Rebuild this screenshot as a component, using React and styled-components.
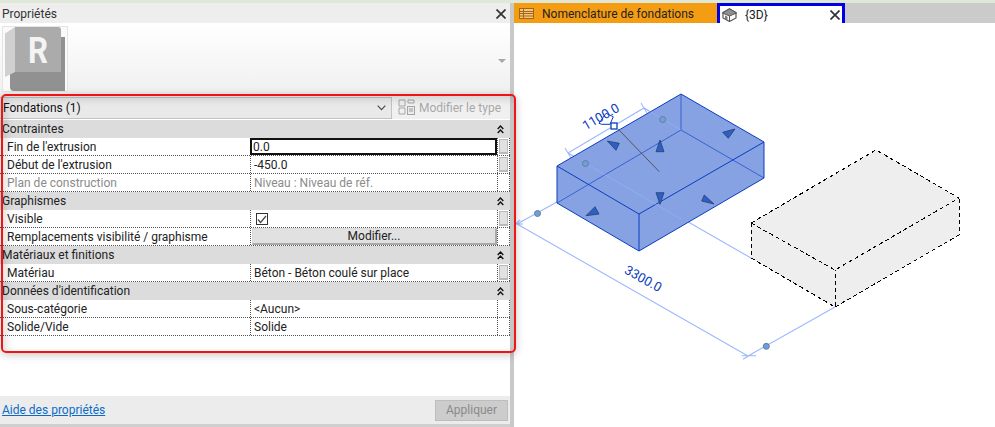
import React from 'react';
import styled, { createGlobalStyle } from 'styled-components';

const GlobalStyle = createGlobalStyle`
  html, body {
    margin: 0;
    padding: 0;
    background: #fff;
  }
  body {
    font-family: Roboto, "Noto Sans", "Liberation Sans", sans-serif;
    font-size: 12px;
    color: #111;
  }
`;

const Window = styled.div`
  position: relative;
  width: 995px;
  height: 427px;
  overflow: hidden;
  display: flex;
  flex-direction: column;
  background: #fff;
`;

const TopStrip = styled.div`
  height: 3px;
  flex: none;
  background: #dfe8d6;
`;

const Main = styled.div`
  flex: 1;
  display: flex;
  min-height: 0;
`;

const Panel = styled.div`
  width: 510px;
  flex: none;
  display: flex;
  flex-direction: column;
  background: #fff;
`;

const Divider = styled.div`
  width: 4px;
  flex: none;
  background: #c9c9c9;
`;

const TitleBar = styled.div`
  height: 20px;
  flex: none;
  box-sizing: border-box;
  display: flex;
  align-items: center;
  justify-content: space-between;
  padding: 2px 4px 0 2px;
  background: #eeeeee;
  color: #333;
`;

const CloseIcon = ({ size = 10, color = '#333' }) => (
  <svg width={size} height={size} viewBox="0 0 10 10">
    <path d="M0.5 0.5 L9.5 9.5 M9.5 0.5 L0.5 9.5" stroke={color} strokeWidth="1.7" fill="none" />
  </svg>
);

const Preview = styled.div`
  height: 71px;
  flex: none;
  box-sizing: border-box;
  display: flex;
  align-items: flex-start;
  justify-content: space-between;
  padding: 3px 4px 0 2px;
  background: linear-gradient(#ffffff, #f0f0f0);
`;

const Thumb = styled.div`
  width: 64px;
  height: 64px;
  border: 1px solid #e4e4e4;
  background: #fafafa;
  svg {
    display: block;
  }
`;

const DropArrow = styled.div`
  margin-top: 33px;
  width: 0;
  height: 0;
  border-left: 4px solid transparent;
  border-right: 4px solid transparent;
  border-top: 4px solid #a8a8a8;
`;

const SelectorRow = styled.div`
  height: 25px;
  flex: none;
  display: flex;
  align-items: center;
  gap: 6px;
  padding-top: 2px;
  box-sizing: border-box;
  background: #f0f0f0;
`;

const TypeSelect = styled.div`
  width: 392px;
  height: 22px;
  box-sizing: border-box;
  display: flex;
  align-items: center;
  justify-content: space-between;
  padding: 0 5px 0 3px;
  border: 1px solid #c2c2c2;
  border-left: 0;
  background: #e9e9e9;
`;

const EditType = styled.div`
  display: flex;
  align-items: center;
  gap: 4px;
  color: #a8a8a8;
  white-space: nowrap;
`;

const Sheet = styled.div`
  display: flex;
  flex-direction: column;
  margin-top: 1px;
`;

const GroupHeader = styled.div`
  height: 18px;
  display: flex;
  align-items: center;
  justify-content: space-between;
  padding: 0 6px 0 2px;
  background: #dcdcdc;
  color: #222;
`;

const Row = styled.div`
  height: 18px;
  box-sizing: border-box;
  display: grid;
  grid-template-columns: 250px 247px 13px;
  border-bottom: 1px dotted #555;
  background: #fff;
`;

const LabelCell = styled.div`
  padding-left: 7px;
  display: flex;
  align-items: center;
  white-space: nowrap;
  color: ${(p) => (p.$muted ? '#8b8b8b' : '#222')};
`;

const ValueCell = styled.div`
  position: relative;
  display: flex;
  align-items: center;
  padding-left: 3px;
  white-space: nowrap;
  border-left: 1px dotted #555;
  color: ${(p) => (p.$muted ? '#8b8b8b' : '#222')};
  ${(p) => p.$active && 'outline: 2px solid #111; outline-offset: -2px; padding-left: 2px;'}
`;

const EndCell = styled.div`
  display: flex;
  align-items: center;
  justify-content: center;
  border-left: 1px dotted #555;
  border-right: 1px dotted #555;
`;

const AssocButton = styled.div`
  width: 9px;
  height: 15px;
  box-sizing: border-box;
  background: #e1e1e1;
  border: 1px solid #b9b9b9;
  border-bottom-width: 2px;
`;

const CheckBox = styled.div`
  width: 12px;
  height: 12px;
  margin-left: 2px;
  margin-top: 1px;
  box-sizing: border-box;
  border: 1px solid #333;
  display: flex;
  align-items: center;
  justify-content: center;
`;

const CellButton = styled.div`
  flex: 1;
  height: 17px;
  margin-left: -2px;
  box-sizing: border-box;
  display: flex;
  align-items: center;
  justify-content: center;
  background: #e1e1e1;
  border: 1px solid #dcdcdc;
  border-right: 2px solid #a9a9a9;
  border-bottom: 2px solid #a9a9a9;
  color: #222;
`;

const Spacer = styled.div`
  flex: 1;
`;

const Footer = styled.div`
  height: 28px;
  flex: none;
  display: flex;
  align-items: center;
  justify-content: space-between;
  padding: 0 2px 0 2px;
  background: #ececec;
`;

const HelpLink = styled.a`
  color: #0a6cc8;
  text-decoration: underline;
`;

const ApplyButton = styled.div`
  width: 73px;
  height: 21px;
  box-sizing: border-box;
  display: flex;
  align-items: center;
  justify-content: center;
  background: #cccccc;
  border: 1px solid #bdbdbd;
  color: #8a8a8a;
`;

const BottomEdge = styled.div`
  height: 3px;
  flex: none;
  background: #cfcfcf;
`;

const ViewArea = styled.div`
  flex: 1;
  min-width: 0;
  display: flex;
  flex-direction: column;
`;

const TabBar = styled.div`
  height: 20px;
  flex: none;
  display: flex;
  background: #cbcbcb;
`;

const Tab = styled.div`
  width: ${(p) => p.$width}px;
  box-sizing: border-box;
  display: flex;
  align-items: center;
  gap: 8px;
  white-space: nowrap;
  color: #222;
  ${(p) =>
    p.$current
      ? `
    background: #fff;
    border: 3px solid #0000e6;
    border-bottom: 0;
    padding: 0 2px 0 2px;
  `
      : `
    background: #f59d12;
    padding: 1px 0 0 5px;
  `}
`;

const TabClose = styled.span`
  margin-left: auto;
  display: flex;
`;

const Canvas = styled.svg`
  display: block;
  flex: 1;
  width: 481px;
  height: 404px;
`;

const Highlight = styled.div`
  position: absolute;
  left: 1px;
  top: 94px;
  width: 515px;
  height: 259px;
  box-sizing: border-box;
  border: 2px solid #f01414;
  border-radius: 5px;
  pointer-events: none;
  box-shadow: 0 2px 8px rgba(0, 0, 0, 0.22), inset 3px 3px 8px rgba(0, 0, 0, 0.14);
`;

const ScheduleIcon = () => (
  <svg width="15" height="11" viewBox="0 0 15 11">
    <rect x="0.5" y="0.5" width="14" height="10" fill="#f8c477" stroke="#a0671a" />
    <path d="M0.5 3.5 H14.5 M0.5 5.5 H14.5 M0.5 8 H14.5 M4.5 0.5 V10.5" stroke="#a0671a" fill="none" />
  </svg>
);

const HouseIcon = () => (
  <svg width="15" height="14" viewBox="0 0 15 14">
    <path d="M1 4.5 L7.5 1 L14 4.5 L14 10 L7.5 13.5 L1 10 Z" fill="#fff" stroke="#555" strokeWidth="1.2" />
    <path d="M0.5 5 L7.5 0.7 L14.5 5 L7.5 8 Z" fill="#8f8f8f" stroke="#555" />
    <path d="M7.5 8 V13.5" stroke="#555" />
    <path d="M3 7.5 L5.5 8.7 V12 L3 10.7 Z" fill="#777" />
  </svg>
);

const RevitLogo = () => (
  <svg width="64" height="64" viewBox="0 0 64 64">
    <path d="M7 45 H58 V10 H62 V64 H11 Q7 64 7 60 Z" fill="#919191" />
    <path d="M12 0 L2 6.5 L2 50 L12 45 Z" fill="#d0d0d0" />
    <path d="M12 0 H55 Q58 0 58 3 V45 H12 Z" fill="#ababab" />
    <text
      x="25"
      y="36"
      fontFamily="Roboto, sans-serif"
      fontWeight="700"
      fontSize="36"
      fill="#f4f4f4"
      textLength="20"
      lengthAdjust="spacingAndGlyphs"
    >
      R
    </text>
  </svg>
);

const EditTypeIcon = () => (
  <svg width="17" height="17" viewBox="0 0 17 17">
    <path d="M1 1 H7 V7 H1 Z M1 9 H7 V15 H1 Z M10 1 H16 V4 H10 Z" fill="none" stroke="#a5a5a5" />
    <rect x="9.5" y="7.5" width="7" height="8" fill="#ececec" stroke="#a5a5a5" />
    <path d="M11 10 H15 M11 12 H15" stroke="#999" />
  </svg>
);

const CollapseIcon = () => (
  <svg width="7" height="9" viewBox="0 0 7 9">
    <path d="M0.7 4 L3.5 1 L6.3 4 M0.7 8 L3.5 5 L6.3 8" fill="none" stroke="#111" strokeWidth="1.4" />
  </svg>
);

const Chevron = () => (
  <svg width="9" height="6" viewBox="0 0 9 6">
    <path d="M0.7 0.7 L4.5 4.7 L8.3 0.7" fill="none" stroke="#444" strokeWidth="1.1" />
  </svg>
);

const groups = [
  {
    title: 'Contraintes',
    rows: [
      { label: "Fin de l'extrusion", value: '0.0', active: true, assoc: true },
      { label: "Début de l'extrusion", value: '-450.0', assoc: true },
      { label: 'Plan de construction', value: 'Niveau : Niveau de réf.', muted: true },
    ],
  },
  {
    title: 'Graphismes',
    rows: [
      { label: 'Visible', check: true, assoc: true },
      { label: 'Remplacements visibilité / graphisme', button: 'Modifier...' },
    ],
  },
  {
    title: 'Matériaux et finitions',
    rows: [{ label: 'Matériau', value: 'Béton - Béton coulé sur place', assoc: true }],
  },
  {
    title: "Données d'identification",
    rows: [
      { label: 'Sous-catégorie', value: '<Aucun>' },
      { label: 'Solide/Vide', value: 'Solide' },
    ],
  },
];

// model handles, in canvas coordinates (page x - 514, page y - 43)
const arrows = [
  '93.3,98 105.3,100.3 102,107.3',
  '146,97 142,108.7 150,108.7',
  '221,86 208.7,89.3 214.3,95.3',
  '142,149.7 150,149.7 146,161.3',
  '187.7,158 190.3,152 200,161',
  '72,172.7 81,163.7 85,171',
];
const dots = [
  [71.5, 120.5],
  [148.7, 76.5],
  [23.5, 170.5],
  [252.3, 303.3],
];

function Model() {
  const dim = '#9db8ff';
  const edge = '#0a3cc0';
  return (
    <Canvas viewBox="0 -20 481 404">
      {/* dashed body */}
      <path d="M237 180 L362 107 L445 155 L445 192 L321 264 L237 215 Z" fill="#eeeeee" />
      <path
        d="M237 180 L362 107 L445 155 L321 227 Z M237 180 V215 L321 264 V227 M321 264 L445 192 V155"
        fill="none"
        stroke="#000"
        strokeWidth="1"
        strokeDasharray="4 3"
        shapeRendering="crispEdges"
      />
      {/* dimension lines */}
      <path
        d="M3 181 L234 313 M3 181 L43 159 M234 313 L321 264 M54 110 L237 215 M54 110 L130 65 L167 87 M51 105 L57 115 M127 60 L133 70 M227.7 312.7 H242 M229 316.3 L239 310.3 M0 181 H9 M-1 183 L6 177"
        fill="none"
        stroke={dim}
        strokeWidth="1.1"
      />
      {/* selected body */}
      <path d="M43 123 L167 51 L250 99 L250 135 L125 208 L43 160 Z" fill="#87a2e2" />
      <path d="M43 160 L167 87 L250 135 M167 51 V87" fill="none" stroke="#2e5ad0" strokeWidth="0.9" />
      <path
        d="M43 123 L167 51 L250 99 L125 171 Z M43 123 V160 L125 208 V171 M125 208 L250 135 V99"
        fill="none"
        stroke={edge}
        strokeWidth="1"
      />
      <path d="M71.5 120.5 L167 176 M130 65 L167 87" fill="none" stroke={dim} strokeWidth="0.8" opacity="0.6" />
      <path d="M104.3 86.3 L145.3 128.7" stroke="#555" strokeWidth="1" />
      {arrows.map((points) => (
        <polygon key={points} points={points} fill="#2f5fc4" stroke="#24406f" strokeWidth="0.8" />
      ))}
      {dots.map(([x, y]) => (
        <circle key={`${x}-${y}`} cx={x} cy={y} r="3" fill="#6a9fe6" stroke="#6d7b8c" strokeWidth="1" />
      ))}
      {/* pin + lock */}
      <path d="M85 80.3 L92 70.3 L99.3 73.7 L96 81.3 L87.7 81.3 Z" fill="none" stroke="#0a3cc0" strokeWidth="1" />
      <rect x="97" y="80" width="6" height="6" fill="#fff" stroke="#0a3cc0" strokeWidth="1.3" />
      <text x="87" y="78" textAnchor="middle" transform="rotate(-30 87 74)" fill="#0a3cc0" fontSize="13" fontFamily="Roboto, sans-serif">
        1100.0
      </text>
      <text x="129" y="240" textAnchor="middle" transform="rotate(29 129 236)" fill="#0a3cc0" fontSize="13" fontFamily="Roboto, sans-serif">
        3300.0
      </text>
    </Canvas>
  );
}

export default function App() {
  return (
    <>
      <GlobalStyle />
      <Window>
        <TopStrip />
        <Main>
          <Panel>
            <TitleBar>
              <span>Propriétés</span>
              <CloseIcon />
            </TitleBar>
            <Preview>
              <Thumb>
                <RevitLogo />
              </Thumb>
              <DropArrow />
            </Preview>
            <SelectorRow>
              <TypeSelect>
                <span>Fondations (1)</span>
                <Chevron />
              </TypeSelect>
              <EditType>
                <EditTypeIcon />
                <span>Modifier le type</span>
              </EditType>
            </SelectorRow>
            <Sheet>
              {groups.map((group) => (
                <React.Fragment key={group.title}>
                  <GroupHeader>
                    <span>{group.title}</span>
                    <CollapseIcon />
                  </GroupHeader>
                  {group.rows.map((row) => (
                    <Row key={row.label}>
                      <LabelCell $muted={row.muted}>{row.label}</LabelCell>
                      <ValueCell $muted={row.muted} $active={row.active}>
                        {row.value}
                        {row.check && (
                          <CheckBox>
                            <svg width="10" height="9" viewBox="0 0 10 9">
                              <path d="M1 4.5 L3.5 7.5 L9 1" fill="none" stroke="#444" strokeWidth="1.2" />
                            </svg>
                          </CheckBox>
                        )}
                        {row.button && <CellButton>{row.button}</CellButton>}
                      </ValueCell>
                      <EndCell>{row.assoc && <AssocButton />}</EndCell>
                    </Row>
                  ))}
                </React.Fragment>
              ))}
            </Sheet>
            <Spacer />
            <Footer>
              <HelpLink href="#">Aide des propriétés</HelpLink>
              <ApplyButton>Appliquer</ApplyButton>
            </Footer>
            <BottomEdge />
          </Panel>
          <Divider />
          <ViewArea>
            <TabBar>
              <Tab $width={203}>
                <ScheduleIcon />
                <span>Nomenclature de fondations</span>
              </Tab>
              <Tab $width={128} $current>
                <HouseIcon />
                <span>{'{3D}'}</span>
                <TabClose>
                  <CloseIcon />
                </TabClose>
              </Tab>
            </TabBar>
            <Model />
          </ViewArea>
        </Main>
        <Highlight />
      </Window>
    </>
  );
}
